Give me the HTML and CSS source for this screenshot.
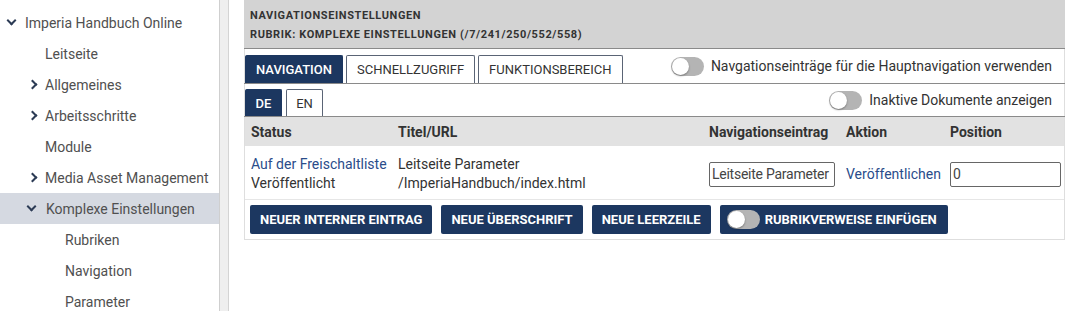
FILE: index.html
```html
<!DOCTYPE html>
<html lang="de">
<head>
    <meta charset="UTF-8">
    <title>Navigationseinstellungen</title>
    <link rel="stylesheet" href="styles.css">
</head>
<body>
    <!-- Seitenleiste -->
    <nav class="sidebar">
        <div class="item lvl1"><span class="chev down"></span>Imperia Handbuch Online</div>
        <div class="item lvl2 plain">Leitseite</div>
        <div class="item lvl2"><span class="chev right"></span>Allgemeines</div>
        <div class="item lvl2"><span class="chev right"></span>Arbeitsschritte</div>
        <div class="item lvl2 plain">Module</div>
        <div class="item lvl2"><span class="chev right"></span>Media Asset Management</div>
        <div class="item lvl2 active"><span class="chev down"></span>Komplexe Einstellungen</div>
        <div class="item lvl3">Rubriken</div>
        <div class="item lvl3">Navigation</div>
        <div class="item lvl3">Parameter</div>
    </nav>
    <div class="scroll-track"></div>

    <main class="main">
        <section class="panel">
            <header class="panel-head">
                <div>NAVIGATIONSEINSTELLUNGEN</div>
                <div>RUBRIK: KOMPLEXE EINSTELLUNGEN (/7/241/250/552/558)</div>
            </header>

            <div class="bar">
                <div class="tabs">
                    <button class="tab active">NAVIGATION</button>
                    <button class="tab">SCHNELLZUGRIFF</button>
                    <button class="tab">FUNKTIONSBEREICH</button>
                </div>
                <label class="switch-label"><span class="switch"></span>Navgationseinträge für die Hauptnavigation verwenden</label>
            </div>

            <div class="bar lang">
                <div class="tabs">
                    <button class="tab small active">DE</button>
                    <button class="tab small">EN</button>
                </div>
                <label class="switch-label"><span class="switch"></span>Inaktive Dokumente anzeigen</label>
            </div>

            <table class="nav-table">
                <thead>
                    <tr>
                        <th class="c-status">Status</th>
                        <th class="c-title">Titel/URL</th>
                        <th class="c-entry">Navigationseintrag</th>
                        <th class="c-action">Aktion</th>
                        <th class="c-pos">Position</th>
                    </tr>
                </thead>
                <tbody>
                    <tr>
                        <td><a href="#">Auf der Freischaltliste</a><br>Veröffentlicht</td>
                        <td>Leitseite Parameter<br>/ImperiaHandbuch/index.html</td>
                        <td><input class="field entry" type="text" value="Leitseite Parameter"></td>
                        <td><a href="#">Veröffentlichen</a></td>
                        <td><input class="field pos" type="text" value="0"></td>
                    </tr>
                </tbody>
            </table>

            <div class="actions">
                <button class="btn">NEUER INTERNER EINTRAG</button>
                <button class="btn">NEUE ÜBERSCHRIFT</button>
                <button class="btn">NEUE LEERZEILE</button>
                <button class="btn with-switch"><span class="switch"></span>RUBRIKVERWEISE EINFÜGEN</button>
            </div>
        </section>
    </main>
</body>
</html>
```

FILE: styles.css
```css
body {
    margin: 0;
    display: flex;
    height: 311px;
    overflow: hidden;
    font-family: Roboto, "Liberation Sans", Arial, sans-serif;
    font-size: 14px;
    color: #333;
    background: #fff;
}

/* Seitenleiste */
.sidebar {
    width: 219px;
    flex-shrink: 0;
    padding-top: 7px;
    border-right: 1px solid #cfcfcf;
    color: #505050;
}

.item {
    height: 31px;
    display: flex;
    align-items: center;
    white-space: nowrap;
}

.item.lvl1 { padding-left: 6px; }
.item.lvl2 { padding-left: 28px; }
.item.lvl2.plain { padding-left: 45px; }
.item.lvl3 { padding-left: 65px; }

.item.active {
    background-color: #d5d9e1;
    padding-left: 26px;
}

.chev {
    width: 7px;
    height: 7px;
    border-right: 2px solid #2c3b55;
    border-bottom: 2px solid #2c3b55;
    margin-right: 9px;
    box-sizing: border-box;
}

.chev.down {
    transform: rotate(45deg);
    margin: -4px 11px 0 2px;
}

.chev.right {
    transform: rotate(-45deg);
    margin-left: 1px;
}

.lvl1 .chev.down { margin-right: 10px; }

.scroll-track {
    width: 8px;
    flex-shrink: 0;
    background: #efefef;
    border-right: 1px solid #d4d4d4;
}

/* Hauptbereich */
.main {
    flex: 1;
    padding-left: 15px;
    padding-right: 3px;
}

.panel {
    border: 1px solid #dedede;
    border-top: none;
}

.panel-head {
    background: #d3d3d3;
    height: 49px;
    margin: 0 -1px;
    padding: 6px 0 0 6px;
    box-sizing: border-box;
    font-size: 11px;
    font-weight: bold;
    letter-spacing: 0.6px;
    line-height: 19px;
    color: #333;
    border-bottom: 1px solid #8a8a8a;
}

.bar {
    display: flex;
    justify-content: space-between;
    align-items: flex-end;
    height: 34px;
    padding: 0 13px 0 1px;
    margin: 0 -1px;
    border-bottom: 1px solid #8a8a8a;
}

.bar.lang {
    height: 32px;
}

.tabs {
    display: flex;
    gap: 3px;
}

.tab {
    height: 28px;
    padding: 0 10px;
    font-family: inherit;
    font-size: 13px;
    color: #333;
    background: #fff;
    border: 1px solid #5a6475;
    border-bottom: none;
    border-radius: 2px 2px 0 0;
    cursor: pointer;
}

.tab.active {
    background: #1c3760;
    border-color: #1c3760;
    color: #fff;
    font-weight: 500;
}

.tab.small {
    width: 37px;
    height: 27px;
    padding: 0;
}

.lang .tabs {
    gap: 4px;
}

.switch-label {
    display: flex;
    align-items: center;
    gap: 7px;
    align-self: center;
    font-size: 14px;
    color: #333;
}

.switch {
    position: relative;
    display: inline-block;
    width: 33px;
    height: 19px;
    border-radius: 10px;
    background: #b4b4b4;
    flex-shrink: 0;
}

.switch::after {
    content: "";
    position: absolute;
    left: 1px;
    top: 1px;
    width: 17px;
    height: 17px;
    border-radius: 50%;
    background: #fff;
    box-shadow: 0 1px 2px rgba(0, 0, 0, 0.35);
}

/* Tabelle */
.nav-table {
    width: 100%;
    border-collapse: collapse;
    table-layout: fixed;
}

.nav-table th {
    background: #e2e2e2;
    height: 29px;
    padding: 0 6px;
    text-align: left;
    font-weight: bold;
    color: #333;
}

.c-status { width: 135px; }
.c-title { width: 299px; }
.c-entry { width: 125px; }
.c-action { width: 92px; }

.nav-table td {
    padding: 9px 6px 6px;
    line-height: 19px;
    vertical-align: middle;
    border-bottom: 1px solid #e6e6e6;
    white-space: nowrap;
}

.nav-table a {
    color: #2a4c8a;
    text-decoration: none;
}

.field {
    box-sizing: border-box;
    height: 25px;
    padding: 0 2px;
    font-family: inherit;
    font-size: 14px;
    color: #444;
    border: 1px solid #666;
    border-radius: 2px;
}

.field.entry {
    width: 126px;
    letter-spacing: -0.25px;
}

.field.pos { width: 111px; }

/* Buttons */
.actions {
    display: flex;
    gap: 9px;
    padding: 5px 5px 5px;
}

.btn {
    height: 29px;
    padding: 0 10px;
    font-family: inherit;
    font-size: 13px;
    font-weight: bold;
    color: #fff;
    background: #1c3760;
    border: none;
    border-radius: 2px;
    cursor: pointer;
}

.btn.with-switch {
    display: flex;
    align-items: center;
    gap: 5px;
    padding-left: 7px;
    padding-right: 11px;
}
```
